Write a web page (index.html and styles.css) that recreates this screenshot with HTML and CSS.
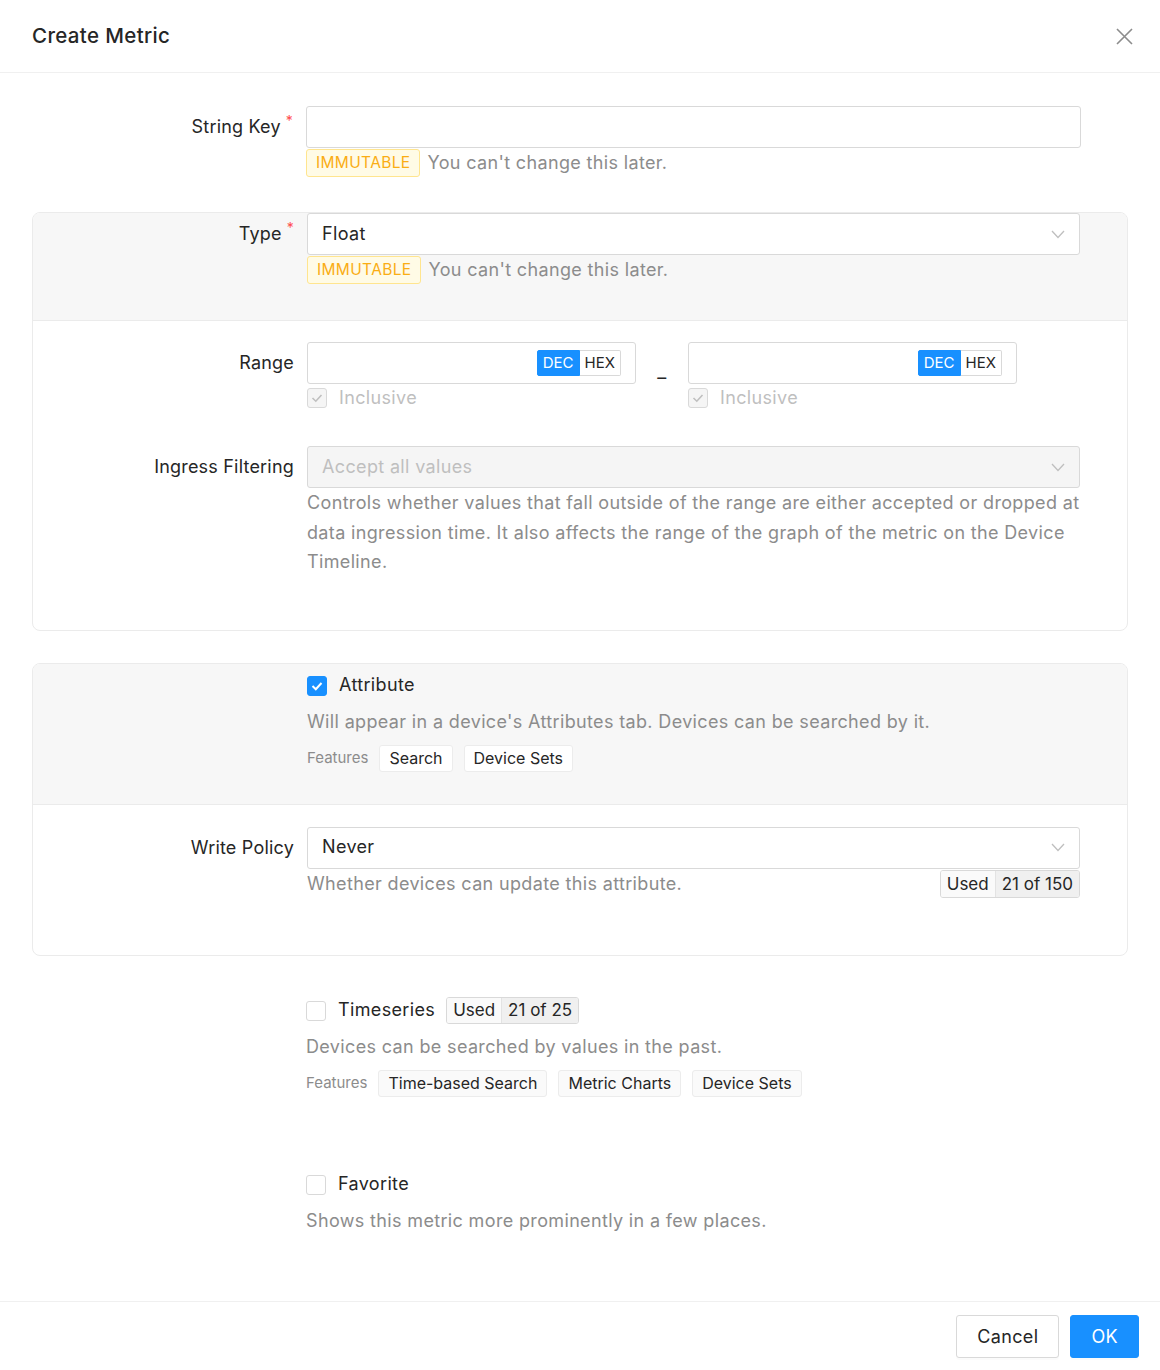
FILE: index.html
```html
<!DOCTYPE html>
<html lang="en">
<head>
  <meta charset="UTF-8">
  <meta name="viewport" content="width=device-width, initial-scale=1.0">
  <title>Create Metric</title>
  <link rel="stylesheet" href="styles.css">
</head>
<body>
  <div class="modal">
    <header class="modal-header">
      <h1 class="modal-title">Create Metric</h1>
      <button class="close-btn" aria-label="Close">
        <svg width="17" height="17" viewBox="0 0 17 17"><path d="M1 1 L16 16 M16 1 L1 16" stroke="#8c8c8c" stroke-width="1.6" fill="none"/></svg>
      </button>
    </header>

    <main class="modal-body">
      <div class="form-row key-row">
        <label class="form-label">String Key<span class="req">*</span></label>
        <div class="form-control">
          <div class="input"></div>
          <div class="extra">
            <span class="tag-gold">IMMUTABLE</span>
            <span class="muted">You can't change this later.</span>
          </div>
        </div>
      </div>

      <section class="card">
        <div class="card-head type-head">
          <div class="form-row">
            <label class="form-label">Type<span class="req">*</span></label>
            <div class="form-control">
              <div class="select">
                <span>Float</span>
                <svg class="chev" width="14" height="9" viewBox="0 0 14 9"><path d="M1 1 L7 7.5 L13 1" stroke="#bfbfbf" stroke-width="1.3" fill="none"/></svg>
              </div>
              <div class="extra">
                <span class="tag-gold">IMMUTABLE</span>
                <span class="muted">You can't change this later.</span>
              </div>
            </div>
          </div>
        </div>
        <div class="card-body range-body">
          <div class="form-row">
            <label class="form-label">Range</label>
            <div class="form-control range">
              <div class="range-side">
                <div class="input range-input">
                  <div class="radix">
                    <span class="radix-opt active">DEC</span><span class="radix-opt">HEX</span>
                  </div>
                </div>
                <div class="check-row disabled">
                  <span class="checkbox disabled">
                    <svg width="20" height="20" viewBox="0 0 20 20"><path d="M5.5 10 L8.8 13.2 L14.5 7" stroke="#bfbfbf" stroke-width="1.6" fill="none"/></svg>
                  </span>
                  <span>Inclusive</span>
                </div>
              </div>
              <div class="range-sep">–</div>
              <div class="range-side">
                <div class="input range-input">
                  <div class="radix">
                    <span class="radix-opt active">DEC</span><span class="radix-opt">HEX</span>
                  </div>
                </div>
                <div class="check-row disabled">
                  <span class="checkbox disabled">
                    <svg width="20" height="20" viewBox="0 0 20 20"><path d="M5.5 10 L8.8 13.2 L14.5 7" stroke="#bfbfbf" stroke-width="1.6" fill="none"/></svg>
                  </span>
                  <span>Inclusive</span>
                </div>
              </div>
            </div>
          </div>

          <div class="form-row ingress-row">
            <label class="form-label">Ingress Filtering</label>
            <div class="form-control">
              <div class="select disabled">
                <span>Accept all values</span>
                <svg class="chev" width="14" height="9" viewBox="0 0 14 9"><path d="M1 1 L7 7.5 L13 1" stroke="#bfbfbf" stroke-width="1.3" fill="none"/></svg>
              </div>
              <p class="help">Controls whether values that fall outside of the range are either accepted or dropped at data ingression time. It also affects the range of the graph of the metric on the Device Timeline.</p>
            </div>
          </div>
        </div>
      </section>

      <section class="card attr-card">
        <div class="card-head attr-head">
          <div class="form-row">
            <div></div>
            <div class="form-control">
              <div class="check-row">
                <span class="checkbox checked">
                  <svg width="20" height="20" viewBox="0 0 20 20"><path d="M5.5 10 L8.8 13.2 L14.5 7" stroke="#fff" stroke-width="2" fill="none"/></svg>
                </span>
                <span>Attribute</span>
              </div>
              <p class="desc">Will appear in a device's Attributes tab. Devices can be searched by it.</p>
              <div class="features">
                <span class="features-label">Features</span>
                <span class="feature">Search</span>
                <span class="feature">Device Sets</span>
              </div>
            </div>
          </div>
        </div>
        <div class="card-body policy-body">
          <div class="form-row">
            <label class="form-label">Write Policy</label>
            <div class="form-control">
              <div class="select">
                <span>Never</span>
                <svg class="chev" width="14" height="9" viewBox="0 0 14 9"><path d="M1 1 L7 7.5 L13 1" stroke="#bfbfbf" stroke-width="1.3" fill="none"/></svg>
              </div>
              <div class="policy-extra">
                <span class="muted">Whether devices can update this attribute.</span>
                <span class="usage"><span class="usage-key">Used</span><span class="usage-val">21 of 150</span></span>
              </div>
            </div>
          </div>
        </div>
      </section>

      <div class="form-row series-row">
        <div></div>
        <div class="form-control">
          <div class="check-row">
            <span class="checkbox"></span>
            <span>Timeseries</span>
            <span class="usage"><span class="usage-key">Used</span><span class="usage-val">21 of 25</span></span>
          </div>
          <p class="desc">Devices can be searched by values in the past.</p>
          <div class="features">
            <span class="features-label">Features</span>
            <span class="feature light">Time-based Search</span>
            <span class="feature light">Metric Charts</span>
            <span class="feature light">Device Sets</span>
          </div>
        </div>
      </div>

      <div class="form-row fav-row">
        <div></div>
        <div class="form-control">
          <div class="check-row">
            <span class="checkbox"></span>
            <span>Favorite</span>
          </div>
          <p class="desc">Shows this metric more prominently in a few places.</p>
        </div>
      </div>
    </main>

    <footer class="modal-footer">
      <button class="btn">Cancel</button>
      <button class="btn btn-primary">OK</button>
    </footer>
  </div>
</body>
</html>
```

FILE: styles.css
```css
* {
  box-sizing: border-box;
}
body {
  margin: 0;
  font-family: Inter, "Noto Sans", sans-serif;
  font-size: 18px;
  line-height: 1.5715;
  letter-spacing: 0.35px;
  color: #262626;
  background: #fff;
}
p {
  margin: 0;
}
.modal {
  width: 1160px;
  height: 1370px;
  display: flex;
  flex-direction: column;
}
.modal-header {
  height: 73px;
  flex: none;
  display: flex;
  align-items: center;
  justify-content: space-between;
  padding: 0 27px 0 32px;
  border-bottom: 1px solid #f0f0f0;
}
.modal-title {
  margin: 0;
  font-size: 20.5px;
  font-weight: 500;
}
.close-btn {
  background: none;
  border: none;
  padding: 0;
  display: flex;
  cursor: pointer;
}
.modal-body {
  flex: 1;
  padding: 33px 32px 0;
}
.modal-footer {
  flex: none;
  height: 69px;
  display: flex;
  justify-content: flex-end;
  align-items: flex-start;
  gap: 11px;
  padding: 13px 21px 0;
  border-top: 1px solid #f0f0f0;
}

/* form grid */
.form-row {
  display: grid;
  grid-template-columns: 274px 775px;
}
.card .form-row {
  grid-template-columns: 274px 773px;
}
.form-label {
  text-align: right;
  padding-right: 13px;
  line-height: 42px;
  letter-spacing: 0.2px;
  white-space: nowrap;
}
.req {
  color: #ff4d4f;
  font-size: 14px;
  vertical-align: top;
  line-height: 30px;
  margin-left: 5px;
}
.input, .select {
  height: 42px;
  border: 1px solid #d9d9d9;
  border-radius: 3px;
  background: #fff;
}
.select {
  display: flex;
  align-items: center;
  justify-content: space-between;
  padding: 0 14px;
}
.select.disabled {
  background: #f5f5f5;
  color: #bfbfbf;
}
.extra {
  display: flex;
  align-items: center;
  gap: 7px;
  margin-top: 1px;
  line-height: 28px;
}
.muted, .desc, .help {
  color: #8c8c8c;
}
.tag-gold {
  height: 28px;
  padding: 0 9px;
  font-size: 15.5px;
  line-height: 26px;
  color: #faad14;
  background: #fffbe6;
  border: 1px solid #ffe58f;
  border-radius: 3px;
}

/* cards */
.key-row {
  margin-bottom: 35px;
}
.card {
  border: 1px solid #ebebeb;
  border-radius: 8px;
  overflow: hidden;
}
.card-head {
  background: #f7f7f7;
  border-bottom: 1px solid #ebebeb;
}
.type-head {
  padding-bottom: 36px;
}
.range-body {
  padding: 21px 0 53px;
}
.range {
  display: flex;
}
.range-side {
  width: 329px;
}
.range-input {
  display: flex;
  align-items: center;
  justify-content: flex-end;
  padding-right: 14px;
}
.range-sep {
  width: 52px;
  text-align: center;
  padding-top: 22px;
  line-height: 28px;
}
.radix {
  display: flex;
  height: 26px;
  font-size: 15px;
  line-height: 24px;
  letter-spacing: 0;
}
.radix-opt {
  padding: 0 5px;
  border: 1px solid #d9d9d9;
  background: #fff;
}
.radix-opt:first-child {
  border-radius: 2px 0 0 2px;
}
.radix-opt:last-child {
  border-left: none;
  border-radius: 0 2px 2px 0;
}
.radix-opt.active {
  background: #1890ff;
  border-color: #1890ff;
  color: #fff;
}
.ingress-row {
  margin-top: 34px;
}
.help {
  line-height: 29.5px;
}

/* checkboxes */
.check-row {
  display: flex;
  align-items: center;
  height: 28px;
  gap: 12px;
}
.check-row.disabled {
  color: #bfbfbf;
}
.checkbox {
  width: 20px;
  height: 20px;
  flex: none;
  display: flex;
  border: 1px solid #d9d9d9;
  border-radius: 3px;
  background: #fff;
}
.checkbox svg {
  margin: -1px;
}
.checkbox.checked {
  background: #1890ff;
  border-color: #1890ff;
}
.checkbox.disabled {
  background: #f5f5f5;
}
.desc {
  margin-top: 8px;
  line-height: 28px;
}
.features {
  display: flex;
  align-items: center;
  gap: 11px;
  margin-top: 9px;
}
.features-label {
  font-size: 15px;
  letter-spacing: 0;
  color: #8c8c8c;
}
.feature {
  height: 27px;
  padding: 0 9px;
  font-size: 16px;
  line-height: 25px;
  letter-spacing: 0;
  background: #fff;
  border: 1px solid #ececec;
  border-radius: 3px;
}
.feature.light {
  background: #fafafa;
}
.attr-card {
  margin-top: 32px;
}
.attr-head {
  padding: 8px 0 32px;
}
.policy-body {
  padding: 22px 0 57px;
}
.policy-extra {
  display: flex;
  align-items: flex-start;
  justify-content: space-between;
  line-height: 28px;
  padding-top: 1px;
}
.usage {
  display: flex;
  height: 28px;
  font-size: 17px;
  line-height: 26px;
  letter-spacing: 0;
  border: 1px solid #d9d9d9;
  border-radius: 3px;
  overflow: hidden;
}
.usage-key {
  padding: 0 6px;
  background: #fafafa;
}
.usage-val {
  padding: 0 6px;
  background: #f0f0f0;
  border-left: 1px solid #e3e3e3;
}
.series-row .usage {
  margin-left: -1px;
  height: 27px;
  line-height: 25px;
}
.series-row {
  margin-top: 41px;
}
.fav-row {
  margin-top: 74px;
}

/* buttons */
.btn {
  height: 43px;
  padding: 0 20px;
  font-family: inherit;
  font-size: 18px;
  letter-spacing: 0.35px;
  color: #262626;
  background: #fff;
  border: 1px solid #d9d9d9;
  border-radius: 3px;
  box-shadow: 0 2px 0 rgba(0, 0, 0, 0.015);
  cursor: pointer;
}
.btn-primary {
  padding: 0 20px;
  color: #fff;
  background: #1890ff;
  border-color: #1890ff;
}
```
